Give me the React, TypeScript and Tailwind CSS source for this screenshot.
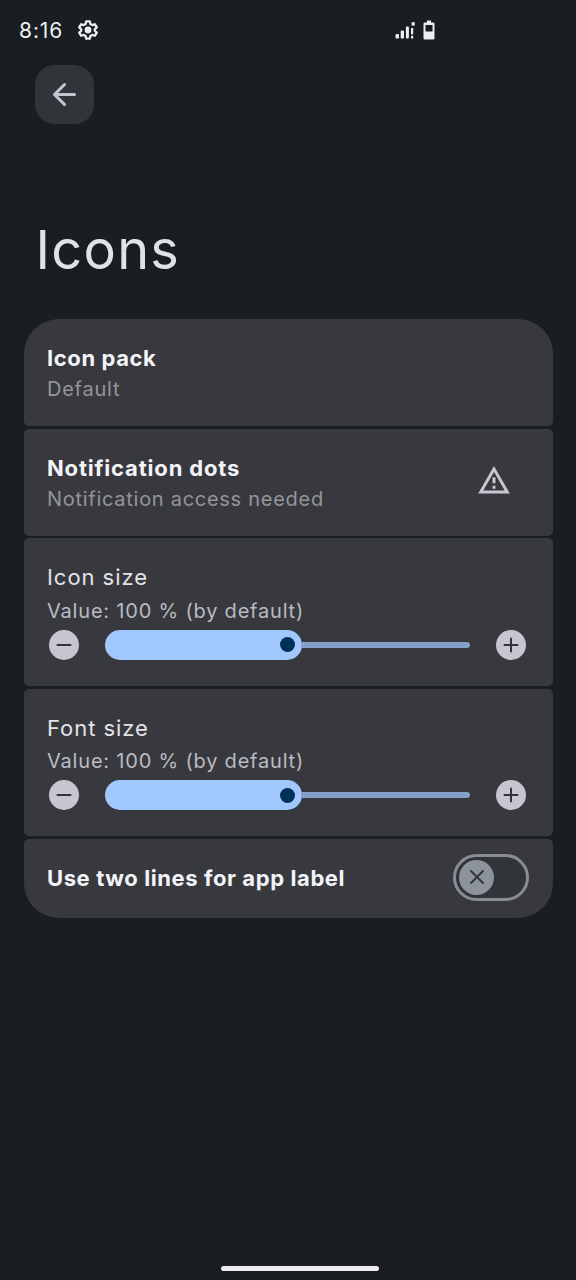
import type { ReactNode } from "react";
import clsx from "clsx";

function StatusBar() {
  return (
    <div className="flex h-[60px] items-center pl-[19px] text-[#eceef2]">
      <span className="w-[58px] whitespace-nowrap pt-px text-[21px] leading-[30px] tracking-[0.9px]">8:16</span>
      <svg className="h-[22px] w-[22px]" viewBox="0 0 24 24" fill="none" stroke="currentColor" strokeWidth="2.5" strokeLinejoin="round">
        <path d="M10 2.5h4l.6 2.9 2.1 1.2 2.9-.9 2 3.4-2.2 2v1.8l2.2 2-2 3.4-2.9-.9-2.1 1.2-.6 2.9h-4l-.6-2.9-2.1-1.2-2.9.9-2-3.4 2.2-2v-1.8l-2.2-2 2-3.4 2.9.9 2.1-1.2z" />
        <circle cx="12" cy="12" r="3.7" fill="currentColor" stroke="none" />
      </svg>
      <svg className="ml-[296px] h-5 w-5" viewBox="0 0 20 20" fill="currentColor">
        <rect x="0.5" y="14" width="3.5" height="4.5" rx="1" />
        <rect x="5.7" y="10.5" width="3.3" height="8" rx="1" />
        <rect x="10.9" y="6.5" width="3" height="12" rx="1" />
        <rect x="16" y="8" width="2.2" height="6.3" />
        <rect x="16" y="15.7" width="2.2" height="2.8" />
        <rect x="16.6" y="2.2" width="3.2" height="3.4" />
      </svg>
      <svg className="ml-[8px] h-5 w-[12px]" viewBox="0 0 12 20" fill="currentColor" fillRule="evenodd">
        <path d="M4 .5h4v2h2.3a1.2 1.2 0 0 1 1.2 1.2v14.6a1.2 1.2 0 0 1-1.2 1.2H1.7a1.2 1.2 0 0 1-1.2-1.2V3.7A1.2 1.2 0 0 1 1.7 2.5H4zM2.5 5v6.5h7V5z" />
      </svg>
    </div>
  );
}

function Card({ className, children }: { className?: string; children: ReactNode }) {
  return <section className={clsx("bg-[#38393e] pl-[23px]", className)}>{children}</section>;
}

function RoundButton({ plus }: { plus?: boolean }) {
  return (
    <button className="flex h-[30px] w-[30px] shrink-0 items-center justify-center rounded-full bg-[#c5c6d0]">
      <svg className="h-4 w-4" viewBox="0 0 16 16" stroke="#2f3238" strokeWidth="2" strokeLinecap="round">
        <path d="M1.5 8h13" />
        {plus && <path d="M8 1.5v13" />}
      </svg>
    </button>
  );
}

function SliderCard({ title, className }: { title: string; className: string }) {
  return (
    <Card className={clsx("rounded-[5px] pt-6", className)}>
      <h2 className="text-[22px] leading-[30px] tracking-[0.95px] text-[#e3e4e9]">{title}</h2>
      <p className="mt-[3.5px] text-[20px] leading-[30px] tracking-[0.8px] text-[#babbc3]">Value: 100 % (by default)</p>
      <div className="mt-1 flex items-center pl-[2px]">
        <RoundButton />
        <div className="ml-[26px] flex w-[365px] items-center">
          <div className="flex h-[30px] w-[197px] items-center justify-end rounded-full bg-[#a0c8fe] pr-[7px]">
            <div className="h-[15px] w-[15px] rounded-full bg-[#003259]" />
          </div>
          <div className="-ml-px h-[6px] flex-1 rounded-r-full bg-[#859fc8]" />
        </div>
        <div className="ml-[26px]">
          <RoundButton plus />
        </div>
      </div>
    </Card>
  );
}

export default function App() {
  return (
    <div className="flex h-[1280px] w-[576px] flex-col overflow-hidden bg-[#1a1d21] font-['Inter',sans-serif]">
      <StatusBar />
      <button className="ml-[35px] mt-[5px] flex h-[59px] w-[59px] items-center justify-center rounded-[20px] bg-[#313439]">
        <svg className="mb-px mr-px h-6 w-6" viewBox="0 0 24 24" fill="none" stroke="#c3c6d2" strokeWidth="3" strokeLinecap="round" strokeLinejoin="round">
          <path d="M22.5 12.5H2.500M12.500 2.500L2.500 12.500l10 10" />
        </svg>
      </button>

      <h1 className="ml-[35.5px] mt-[96px] h-[60px] text-[54px] leading-[60px] tracking-[1.3px] text-[#e1e2e8]">Icons</h1>

      <main className="ml-6 mt-[39px] flex w-[528.5px] flex-col gap-[2.5px]">
        <Card className="h-[107px] rounded-b-[5px] rounded-t-[35px] pt-6">
          <h2 className="text-[22px] font-bold leading-[30px] tracking-[0.6px] text-[#f3f4f8]">Icon pack</h2>
          <p className="pt-px text-[20px] leading-[31px] tracking-[0.75px] text-[#94959a]">Default</p>
        </Card>

        <Card className="flex h-[107px] justify-between rounded-[5px] pr-[42.5px] pt-6">
          <div>
            <h2 className="text-[22px] font-bold leading-[30px] tracking-[0.82px] text-[#f3f4f8]">Notification dots</h2>
            <p className="pt-px text-[20px] leading-[31px] tracking-[0.72px] text-[#94959a]">Notification access needed</p>
          </div>
          <svg className="mt-[13px] h-[28px] w-[32px]" viewBox="0 0 32 28">
            <path d="M16 3L29.3 26H2.7z" fill="none" stroke="#c9c7d1" strokeWidth="2.9" />
            <path d="M16 11.2v6M16 19.7v3" stroke="#c9c7d1" strokeWidth="2.9" />
          </svg>
        </Card>

        <SliderCard title="Icon size" className="h-[148px]" />
        <SliderCard title="Font size" className="h-[147.5px]" />

        <Card className="flex h-[79.5px] items-center justify-between rounded-b-[35px] rounded-t-[5px] pr-[23.5px]">
          <h2 className="text-[22px] font-bold leading-[30px] tracking-[0.6px] text-[#f3f4f8]">Use two lines for app label</h2>
          <button className="mb-[2px] flex h-[47px] w-[76px] items-center rounded-full border-[3px] border-[#898c92] bg-[#30353a] pl-[3px]">
            <span className="flex h-[35px] w-[35px] items-center justify-center rounded-full bg-[#8d939c]">
              <svg className="h-[14px] w-[14px]" viewBox="0 0 14 14" stroke="#30353a" strokeWidth="1.9" strokeLinecap="round">
                <path d="M1 1l12 12M13 1L1 13" />
              </svg>
            </span>
          </button>
        </Card>
      </main>

      <div className="mb-[9px] ml-[221px] mt-auto h-[5.5px] w-[158px] rounded-full bg-[#ececee]" />
    </div>
  );
}
